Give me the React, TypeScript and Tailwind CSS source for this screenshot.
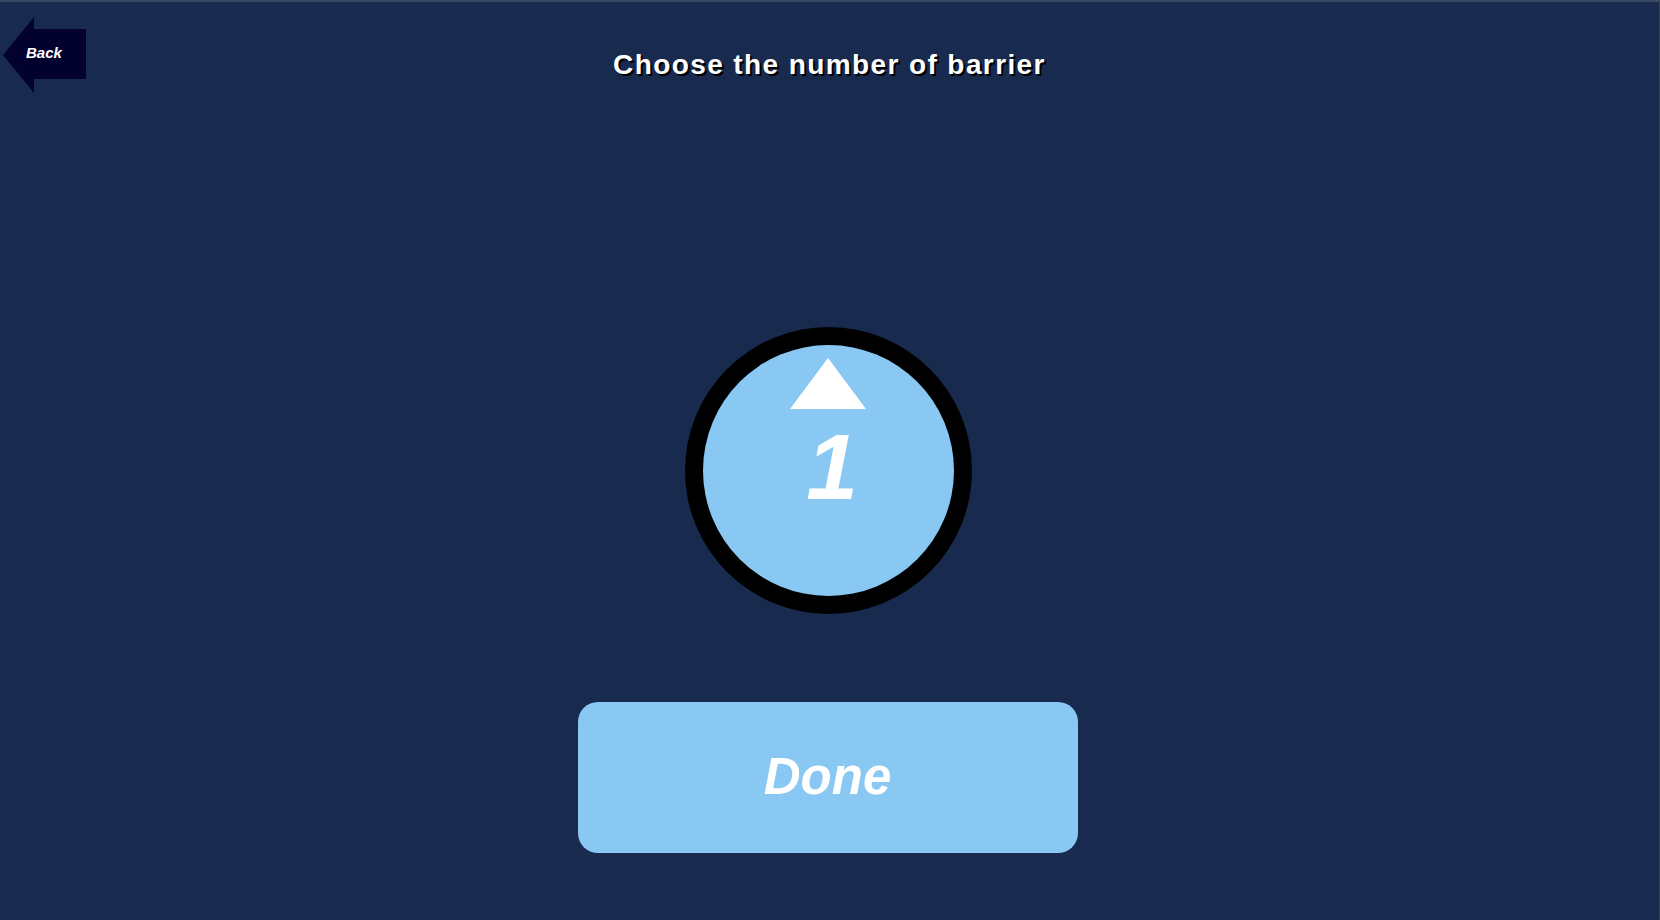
import { useState } from "react";

const FONT = { fontFamily: '"Liberation Sans", Arial, Helvetica, sans-serif' };

function BackButton() {
  return (
    <button className="absolute left-0 top-0 w-[90px] h-[92px]">
      <svg width="90" height="92" viewBox="0 0 90 92" className="absolute left-0 top-0">
        <polygon points="3,53 34,15 34,27 86,27 86,77 34,77 34,91" fill="#03022f" />
      </svg>
      <span
        className="absolute left-[26px] top-[42px] text-[15px] font-bold italic text-white leading-[18px]"
        style={FONT}
      >
        Back
      </span>
    </button>
  );
}

// Круглый счётчик: стрелка вверх + число
function Counter({ value, onUp }: { value: number; onUp: () => void }) {
  return (
    <div className="w-full flex justify-center pr-[3px]">
      <div className="w-[287px] h-[287px] rounded-full bg-black flex items-center justify-center">
        <div className="w-[251px] h-[251px] rounded-full bg-[#89c8f3] flex flex-col items-center pt-[13px]">
          <button onClick={onUp} className="block">
            <svg width="76" height="51" viewBox="0 0 76 51">
              <polygon points="38,0 76,51 0,51" fill="#ffffff" />
            </svg>
          </button>
          <span
            className="mt-[12px] pl-[8px] text-[93px] leading-[93px] font-bold italic text-white"
            style={FONT}
          >
            {value}
          </span>
        </div>
      </div>
    </div>
  );
}

export default function App() {
  const [count, setCount] = useState(1);

  return (
    <div
      className="relative w-[1660px] h-[920px] bg-[#182a4e] border-t-2 border-t-[#3a4862] border-r border-r-[#34445f] flex flex-col items-center overflow-hidden"
      style={FONT}
    >
      <BackButton />
      <h1
        className="mt-[47px] text-[28px] leading-[32px] font-bold text-white tracking-[1.4px] [text-shadow:2px_2px_0_#000]"
        style={FONT}
      >
        Choose the number of barrier
      </h1>
      <div className="mt-[246px] w-full">
        <Counter value={count} onUp={() => setCount((c) => c + 1)} />
      </div>
      <div className="mt-[88px] w-full flex justify-center pr-[4px]">
        <button className="w-[500px] h-[151px] rounded-[20px] bg-[#89c8f3] flex items-center justify-center">
          <span
            className="text-[51px] leading-[60px] font-bold italic text-white pb-[2px]"
            style={FONT}
          >
            Done
          </span>
        </button>
      </div>
    </div>
  );
}
